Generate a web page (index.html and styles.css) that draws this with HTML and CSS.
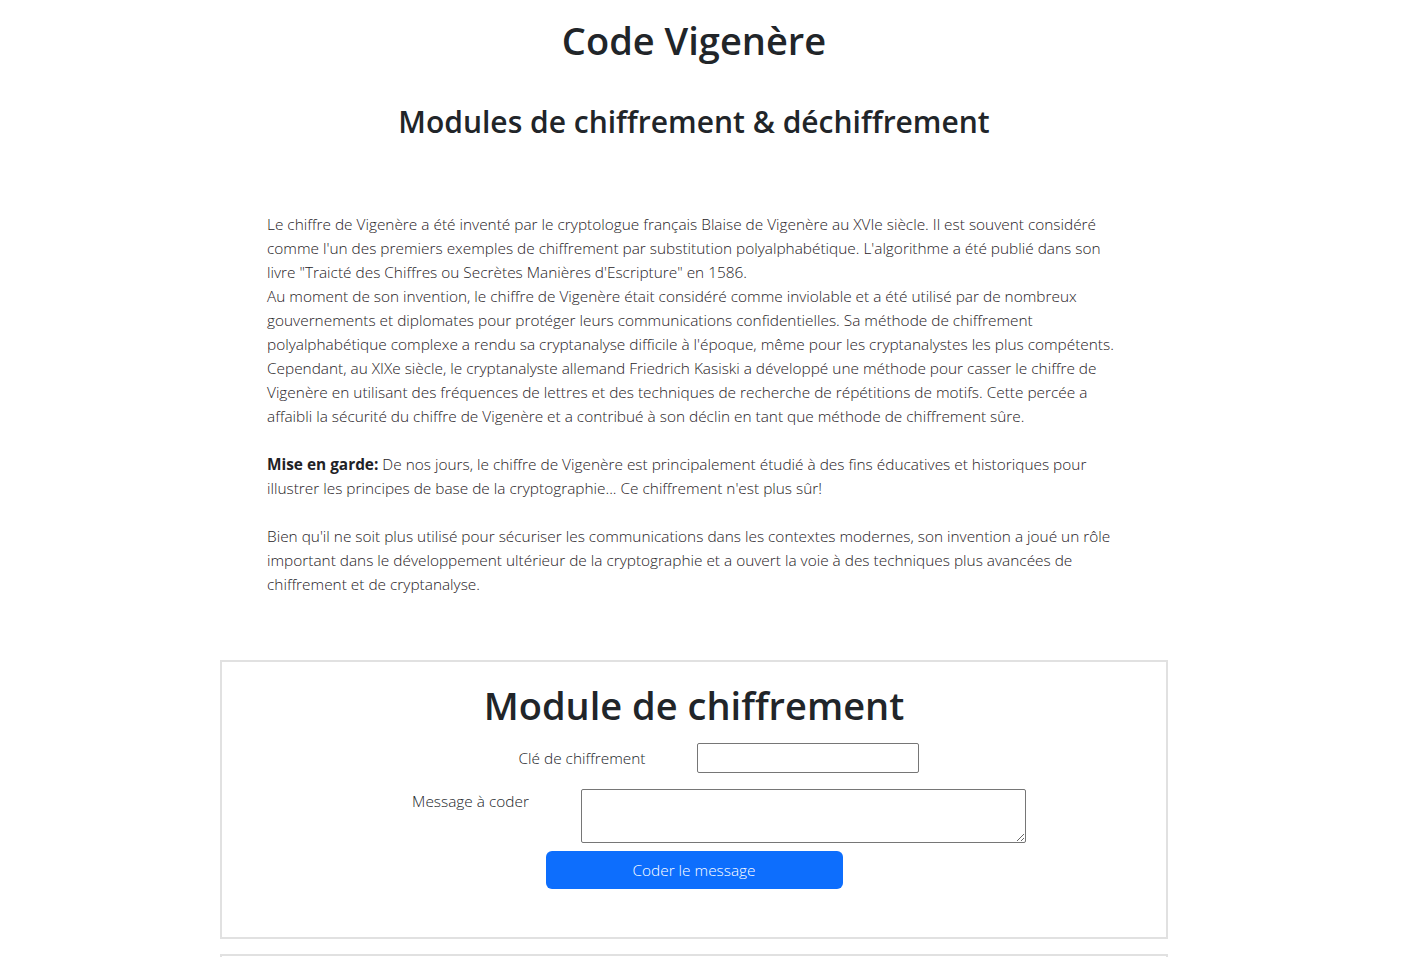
FILE: index.html
```html
<!DOCTYPE html>
<html lang="fr">
<head>
<meta charset="utf-8">
<title>Code Vigenère</title>
<link rel="stylesheet" href="styles.css">
</head>
<body>
<main class="page">
  <header class="intro">
    <h1 class="title">Code Vigenère</h1>
    <h2 class="subtitle">Modules de chiffrement &amp; déchiffrement</h2>
  </header>
  <p class="history">Le chiffre de Vigenère a été inventé par le cryptologue français Blaise de Vigenère au XVIe siècle. Il est souvent considéré comme l'un des premiers exemples de chiffrement par substitution polyalphabétique. L'algorithme a été publié dans son livre "Traicté des Chiffres ou Secrètes Manières d'Escripture" en 1586.<br>Au moment de son invention, le chiffre de Vigenère était considéré comme inviolable et a été utilisé par de nombreux gouvernements et diplomates pour protéger leurs communications confidentielles. Sa méthode de chiffrement polyalphabétique complexe a rendu sa cryptanalyse difficile à l'époque, même pour les cryptanalystes les plus compétents. Cependant, au XIXe siècle, le cryptanalyste allemand Friedrich Kasiski a développé une méthode pour casser le chiffre de Vigenère en utilisant des fréquences de lettres et des techniques de recherche de répétitions de motifs. Cette percée a affaibli la sécurité du chiffre de Vigenère et a contribué à son déclin en tant que méthode de chiffrement sûre.<br><br><strong>Mise en garde:</strong> De nos jours, le chiffre de Vigenère est principalement étudié à des fins éducatives et historiques pour illustrer les principes de base de la cryptographie... Ce chiffrement n'est plus sûr!<br><br>Bien qu'il ne soit plus utilisé pour sécuriser les communications dans les contextes modernes, son invention a joué un rôle important dans le développement ultérieur de la cryptographie et a ouvert la voie à des techniques plus avancées de chiffrement et de cryptanalyse.</p>

  <section class="module">
    <h2 class="module-title">Module de chiffrement</h2>
    <form class="module-form">
      <div class="field">
        <label class="field-label" for="cle">Clé de chiffrement</label>
        <input class="field-input" id="cle" type="text">
      </div>
      <div class="field field-top">
        <label class="field-label" for="msg">Message à coder</label>
        <textarea class="field-area" id="msg"></textarea>
      </div>
      <button class="btn-primary" type="button">Coder le message</button>
    </form>
  </section>

  <section class="module module-next">
    <h2 class="module-title">Module de déchiffrement</h2>
  </section>
</main>
</body>
</html>
```

FILE: styles.css
```css
* { box-sizing: border-box; }
html, body { margin: 0; padding: 0; }
body {
  font-family: "Open Sans", "Noto Sans", sans-serif;
  font-weight: 300;
  color: #212529;
  background: #fff;
  overflow: hidden;
}
.page {
  width: 948px;
  margin-left: 220px;
}
.intro { text-align: center; }
.title {
  margin: 16px 0 0;
  font-size: 38px;
  line-height: 48px;
  font-weight: 600;
}
.subtitle {
  margin: 39px 0 0;
  font-size: 30px;
  line-height: 38px;
  font-weight: 600;
}
.history {
  margin: 72px 0 0 47px;
  width: 856px;
  font-size: 15.4px;
  line-height: 24px;
  color: #1f2226;
}
.history strong { font-weight: 700; }
.module {
  margin-top: 63px;
  border: 2px solid #e1e1e1;
  padding: 20px 0 48px;
  text-align: center;
}
.module-title {
  margin: 0 0 15px;
  font-size: 38px;
  line-height: 46px;
  font-weight: 600;
}
.module-form {
  display: flex;
  flex-direction: column;
  align-items: center;
}
.field {
  display: flex;
  align-items: center;
  gap: 52px;
  padding-left: 50px;
  margin-bottom: 16px;
  font-size: 15.4px;
}
.field-top { align-items: flex-start; margin-bottom: 8px; }
.field-top .field-label { padding-top: 2px; }
.field-input {
  width: 222px;
  height: 30px;
  border: 1px solid #767676;
  border-radius: 2px;
}
.field-area {
  width: 445px;
  height: 54px;
  border: 1px solid #767676;
  border-radius: 2px;
}
.btn-primary {
  width: 297px;
  height: 38px;
  border: 0;
  border-radius: 6px;
  background: #0d6efd;
  color: #fff;
  font-family: inherit;
  font-weight: 300;
  font-size: 15.4px;
}
.module-next {
  margin-top: 15px;
  height: 200px;
}
```
